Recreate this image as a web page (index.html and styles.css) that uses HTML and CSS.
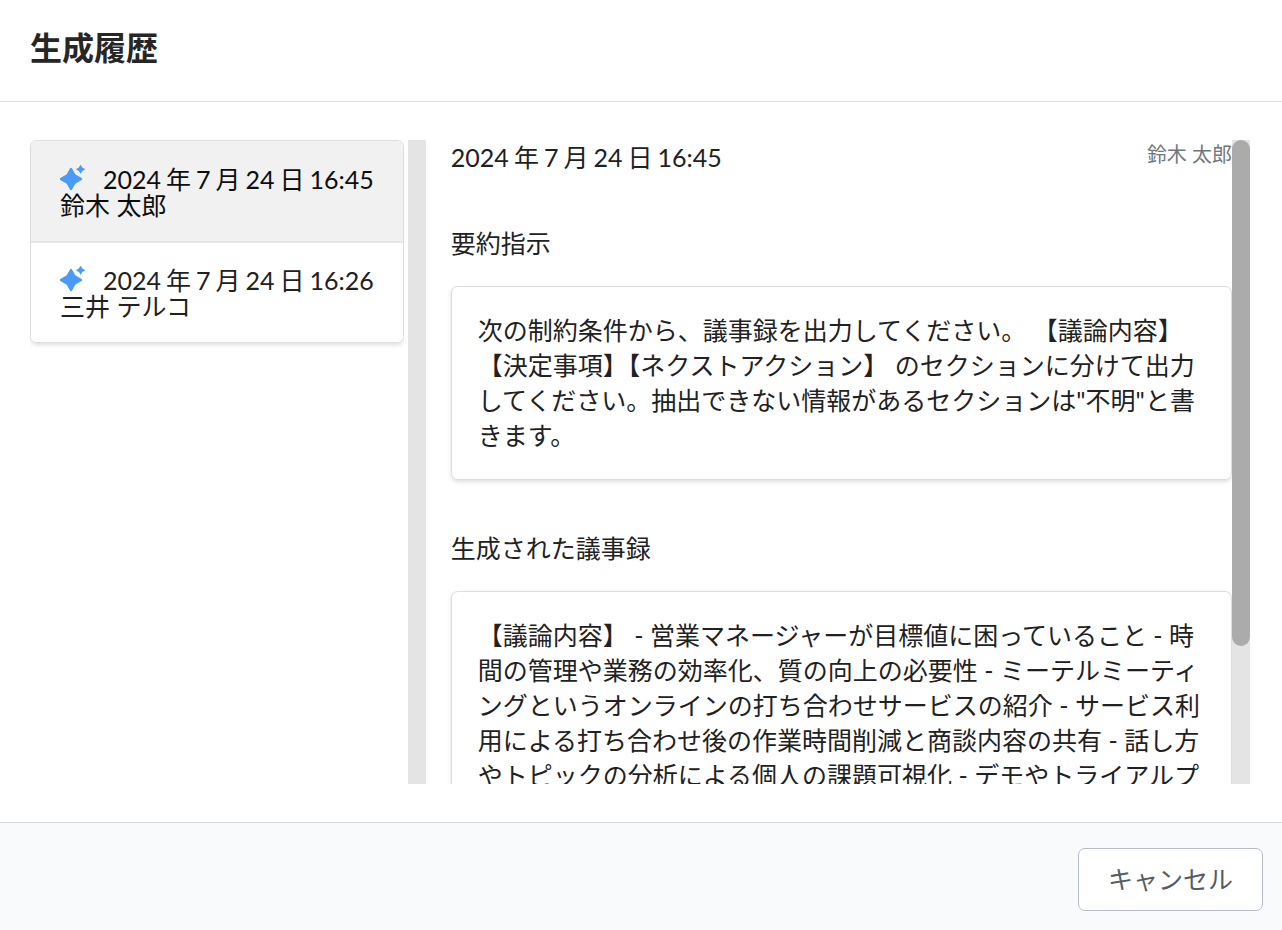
FILE: index.html
```html
<!DOCTYPE html>
<html lang="ja">
<head>
<meta charset="utf-8">
<meta name="viewport" content="width=device-width, initial-scale=1">
<title>生成履歴</title>
<link rel="stylesheet" href="styles.css">
</head>
<body>
<div class="modal" role="dialog" aria-labelledby="modal-title">
  <header class="modal-header">
    <h1 class="modal-title" id="modal-title">生成履歴</h1>
  </header>
  <main class="modal-content">
    <div class="pane pane-history">
      <nav class="history">
        <div class="history-list">
          <button class="history-item active" type="button">
            <span class="history-date">
              <svg class="sparkle" viewBox="0 0 26 26" aria-hidden="true"><path d="M9.700 4Q11 1.600 12.300 4L15 8.800Q15.500 9.600 16.400 10.100L21.200 12.700Q23.400 14 21.200 15.300L16.400 17.900Q15.500 18.400 15 19.200L12.300 24Q11 26.400 9.700 24L7 19.200Q6.500 18.400 5.600 17.900L.8 15.300Q-1.400 14 .8 12.700L5.600 10.100Q6.500 9.600 7 8.800ZM20 .6Q20.600-.4 21.200 .6L22.300 2.600 24.400 3.700Q25.600 4.300 24.400 4.900L22.300 6 21.200 8Q20.600 9 20 8L18.900 6 16.800 4.900Q15.600 4.300 16.800 3.700L18.900 2.600Z"/></svg>
              <time class="stamp"><span>2024</span> <span>年</span> <span>7</span> <span>月</span> <span>24</span> <span>日</span> <span>16:45</span></time>
            </span>
            <span class="history-name">鈴木 太郎</span>
          </button>
          <button class="history-item" type="button">
            <span class="history-date">
              <svg class="sparkle" viewBox="0 0 26 26" aria-hidden="true"><path d="M9.700 4Q11 1.600 12.300 4L15 8.800Q15.500 9.600 16.400 10.100L21.200 12.700Q23.400 14 21.200 15.300L16.400 17.900Q15.500 18.400 15 19.200L12.300 24Q11 26.400 9.700 24L7 19.200Q6.500 18.400 5.600 17.900L.8 15.300Q-1.400 14 .8 12.700L5.600 10.100Q6.500 9.600 7 8.800ZM20 .6Q20.600-.4 21.200 .6L22.300 2.600 24.400 3.700Q25.600 4.300 24.400 4.900L22.300 6 21.200 8Q20.600 9 20 8L18.900 6 16.800 4.900Q15.600 4.300 16.800 3.700L18.900 2.600Z"/></svg>
              <time class="stamp"><span>2024</span> <span>年</span> <span>7</span> <span>月</span> <span>24</span> <span>日</span> <span>16:26</span></time>
            </span>
            <span class="history-name">三井 テルコ</span>
          </button>
        </div>
      </nav>
      <div class="track"></div>
    </div>
    <div class="pane pane-detail">
      <article class="detail">
        <div class="detail-head">
          <h2 class="detail-date"><time class="stamp"><span>2024</span> <span>年</span> <span>7</span> <span>月</span> <span>24</span> <span>日</span> <span>16:45</span></time></h2>
          <span class="detail-author">鈴木 太郎</span>
        </div>
        <section class="section">
          <h3 class="section-title">要約指示</h3>
          <p class="card">次の制約条件から、議事録を出力してください。 【議論内容】【決定事項】【ネクストアクション】 のセクションに分けて出力してください。抽出できない情報があるセクションは"不明"と書きます。</p>
        </section>
        <section class="section">
          <h3 class="section-title">生成された議事録</h3>
          <p class="card card-result">【議論内容】 - 営業マネージャーが目標値に困っていること - 時間の管理や業務の効率化、質の向上の必要性 - ミーテルミーティングというオンラインの打ち合わせサービスの紹介 - サービス利用による打ち合わせ後の作業時間削減と商談内容の共有 - 話し方やトピックの分析による個人の課題可視化 - デモやトライアルプ</p>
        </section>
      </article>
      <div class="track"><div class="thumb"></div></div>
    </div>
  </main>
  <footer class="modal-actions">
    <button class="cancel" type="button">キャンセル</button>
  </footer>
</div>
</body>
</html>
```
FILE: styles.css
```css
* {
  box-sizing: border-box;
}

body {
  margin: 0;
  background: #fff;
  color: #212121;
  font-family: Lato, "Noto Sans CJK JP", sans-serif;
  font-size: 25px;
  line-height: 35px;
}

h1, h2, h3, p {
  margin: 0;
}

button {
  font: inherit;
  color: inherit;
  cursor: pointer;
}

.modal {
  display: flex;
  flex-direction: column;
  height: 100vh;
}

.modal-header {
  padding: 25px 30px 31px;
  border-bottom: 1px solid #dcdddd;
}

.modal-title {
  color: #262626;
  font-size: 32px;
  font-weight: 700;
  line-height: 45px;
}

.modal-content {
  display: flex;
  flex: 1;
  min-height: 0;
  padding: 38px 32px 38px 30px;
}

.pane {
  display: flex;
  min-width: 0;
}

.pane-history {
  flex: none;
  gap: 4px;
}

.pane-detail {
  flex: 1;
}

.history,
.detail {
  overflow-y: auto;
  scrollbar-width: none;
}

.track {
  flex: none;
  width: 18px;
  background: #e4e4e4;
}

.thumb {
  height: 78.6%;
  border-radius: 9px;
  background: #ababab;
}

.history-list {
  overflow: hidden;
  margin-bottom: 6px;
  border: 1px solid #dcdddd;
  border-radius: 7px;
  box-shadow: 0 2px 4px rgba(34, 36, 38, .15);
}

.history-item {
  display: block;
  width: 100%;
  padding: 23px 29px;
  border: 0;
  background: #fff;
  line-height: 25px;
  text-align: left;
}

.history-item.active {
  padding-top: 24px;
  border-bottom: 2px solid #e6e6e6;
  background: #f1f1f1;
  color: #0d0d0d;
}

.history-name {
  display: block;
}

.history-date {
  display: flex;
  gap: 17px;
  line-height: 28px;
}

.stamp {
  display: flex;
  gap: 5px;
}

.sparkle {
  width: 26px;
  height: 26px;
  fill: #4a9af8;
}

.detail {
  flex: 1;
  min-width: 0;
  padding-left: 25px;
}

.detail-head {
  display: flex;
  justify-content: space-between;
}

.detail-date {
  font-size: 25px;
  font-weight: 400;
}

.detail-author {
  color: #6f777d;
  font-size: 20px;
  line-height: 28px;
}

.section {
  padding-top: 51px;
}

.section-title {
  font-size: 25px;
  font-weight: 400;
}

.card {
  margin-top: 25px;
  padding: 26px;
  border: 1px solid #dcdddd;
  border-radius: 7px;
  box-shadow: 0 2px 4px rgba(34, 36, 38, .15);
}

.card-result {
  min-height: 369px;
}

.modal-actions {
  display: flex;
  justify-content: flex-end;
  padding: 25px 19px 19px;
  border-top: 1px solid #d6d9dc;
  background: #f9fafc;
}

.cancel {
  padding: 13px 29px;
  border: 1px solid #b4bdc7;
  border-radius: 7px;
  background: #fff;
  color: #535c63;
}
```
